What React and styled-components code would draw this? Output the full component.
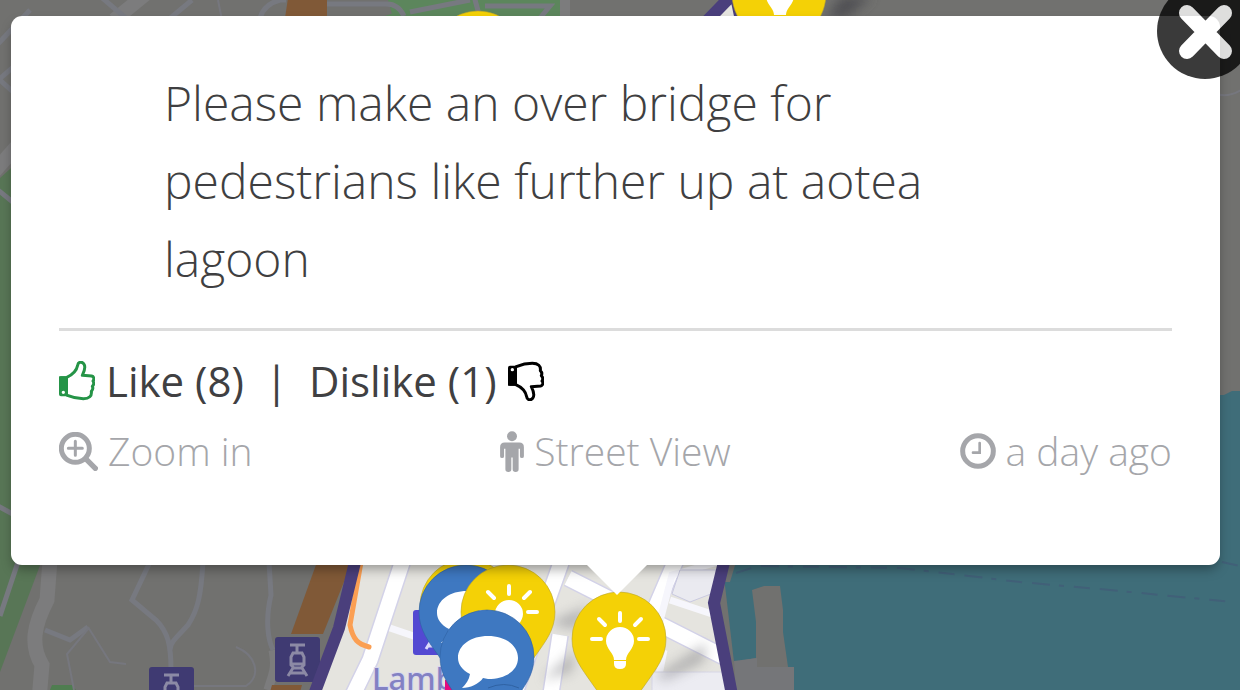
import React from 'react';
import styled, { createGlobalStyle } from 'styled-components';

const GlobalStyle = createGlobalStyle`
  *, *::before, *::after {
    box-sizing: border-box;
  }

  body {
    margin: 0;
    overflow: hidden;
    font-family: 'Open Sans', 'Noto Sans', sans-serif;
  }
`;

const Page = styled.main`
  position: relative;
  min-height: 100vh;
  padding: 16px 20px 0 11px;
  overflow: hidden;
  background: #71716f;
`;

const MapCanvas = styled.svg`
  position: absolute;
  inset: 0;
  width: 100%;
  height: 100%;
`;

const Popup = styled.article`
  position: relative;
  padding: 48px 48px 79px;
  border-radius: 11px;
  background: #fff;
  box-shadow: 0 6px 12px -2px rgba(0, 0, 0, 0.35);

  &::after {
    content: '';
    position: absolute;
    top: 100%;
    left: 50%;
    margin-left: -29px;
    border: 30px solid transparent;
    border-top-color: #fff;
    border-bottom: 0;
  }
`;

const CloseButton = styled.button`
  position: absolute;
  top: -33px;
  right: -33px;
  width: 96px;
  height: 96px;
  padding: 0;
  border: 0;
  border-radius: 50%;
  background: none;
  cursor: pointer;

  svg {
    display: block;
    opacity: 0.77;
  }
`;

const Message = styled.blockquote`
  margin: 0 105px;
  padding-bottom: 30px;
  font-size: 48px;
  font-weight: 300;
  line-height: 78px;
  color: #3f3f41;
`;

const Divider = styled.hr`
  height: 3px;
  margin: 0 0 15px;
  border: 0;
  background: #dcdcdc;
`;

const Votes = styled.div`
  display: flex;
  align-items: center;
  font-size: 42px;
  line-height: 70px;
  color: #404042;
`;

const VoteButton = styled.button`
  display: flex;
  align-items: center;
  gap: 11px;
  padding: 0;
  border: 0;
  background: none;
  font: inherit;
  color: inherit;
  cursor: pointer;
`;

const Separator = styled.span`
  margin: 0 21px;
`;

const Actions = styled.div`
  display: grid;
  grid-template-columns: 1fr auto 1fr;
  font-size: 39px;
  font-weight: 300;
  line-height: 70px;
  color: #a5a6aa;
`;

const Action = styled.a`
  display: flex;
  align-items: center;
  justify-self: ${({ $align }) => $align || 'start'};
  gap: 10px;
  color: inherit;
  text-decoration: none;
`;

function ThumbIcon({ color, down }) {
  return (
    <svg width='36' height='40' viewBox='0 0 108 120' aria-hidden='true'>
      <g transform={down ? 'translate(0 120) scale(1 -1)' : undefined}>
        <path
          d='M3 50H22C38 43 53 29 56 13C57 2 68 1 74 8C82 18 75 33 70 43L98 45C106 47 106 56 102 60C106 66 104 72 100 76C103 82 101 87 97 91C99 105 91 113 73 113C55 113 42 110 25 103'
          fill='none'
          stroke={color}
          strokeWidth='9'
          strokeLinecap='round'
          strokeLinejoin='round'
        />
        <path
          fillRule='evenodd'
          fill={color}
          d='M6 46H27V106H6Q0 106 0 100V52Q0 46 6 46ZM13 89a5 5 0 1 0 0 10a5 5 0 1 0 0-10Z'
        />
      </g>
    </svg>
  );
}

function ZoomIcon() {
  return (
    <svg width='39' height='39' viewBox='0 0 117 117' aria-hidden='true'>
      <g fill='none' stroke='currentColor'>
        <circle cx='49' cy='49' r='42' strokeWidth='15' />
        <path d='M49 28V70M28 49H70' strokeWidth='9' strokeLinecap='round' />
        <path d='M82 82L109 109' strokeWidth='16' strokeLinecap='round' />
      </g>
    </svg>
  );
}

function PersonIcon() {
  return (
    <svg width='24' height='41' viewBox='0 0 72 124' aria-hidden='true'>
      <circle cx='36' cy='16' r='15' fill='currentColor' />
      <path
        fill='currentColor'
        d='M14 35H58Q72 35 72 49V76Q72 82 66 82T60 76V54H56V116Q56 124 47 124T38 116V80H34V116Q34 124 25 124T16 116V54H12V76Q12 82 6 82T0 76V49Q0 35 14 35Z'
      />
    </svg>
  );
}

function ClockIcon() {
  return (
    <svg width='36' height='36' viewBox='0 0 108 108' aria-hidden='true'>
      <g fill='none' stroke='currentColor'>
        <circle cx='54' cy='54' r='46' strokeWidth='15' />
        <path d='M59 30V59H39' strokeWidth='8' strokeLinecap='round' />
      </g>
    </svg>
  );
}

// Every pin is drawn round the centre of its head.
function Pin({ x, y, kind }) {
  const idea = kind === 'idea';
  return (
    <g transform={`translate(${x} ${y})`}>
      <path
        d='M0 -47A47 47 0 0 1 47 0C47 18 37 30 28 43C19 56 6 72 0 88C-6 72 -19 56 -28 43C-37 30 -47 18 -47 0A47 47 0 0 1 0 -47Z'
        fill={idea ? '#f4d106' : '#3e78c1'}
        stroke={idea ? '#b9a52c' : '#2f62a3'}
        strokeWidth='0.6'
      />
      {idea ? (
        <g transform='translate(1 0)'>
          <path
            d='M-28 0H-19M19 0H28M0 -26V-18M-21 -20L-15 -14M21 -20L15 -14'
            stroke='#fff'
            strokeWidth='4'
            strokeLinecap='round'
          />
          <path
            fill='#fff'
            d='M0 -12A14 14 0 0 1 14 2C14 10 6 14 6 21H-6C-6 14 -14 10 -14 2A14 14 0 0 1 0 -12ZM-6 22H6V25Q6 30 0 30T-6 25Z'
          />
        </g>
      ) : (
        <path
          fill='#fff'
          d='M1 -21C18 -21 31 -12 31 1S18 22 1 22L-4 21C-8 27 -17 31 -25 31C-21 27 -18 23 -17 17C-25 13 -29 7 -29 1C-29 -12 -16 -21 1 -21Z'
        />
      )}
    </g>
  );
}

function TramStop({ x, y, color, glyph }) {
  return (
    <g transform={`translate(${x} ${y})`}>
      <rect width='45' height='45' rx='3' fill={color} />
      <path
        d='M15 8H30M22 8V15M18 16H27L29 20V28L26 31H19L16 28V20ZM17 27H28M18 31L13 39M27 31L32 39M15 36H30'
        fill='none'
        stroke={glyph}
        strokeWidth='3'
      />
    </g>
  );
}

function CityMap() {
  const region =
    'M735 -8L640 90L400 400L355 562L339 628L312 700H733L714 603L724 562L800 300Z';
  return (
    <MapCanvas viewBox='0 0 1240 690' preserveAspectRatio='xMidYMid slice' aria-hidden='true'>
      <defs>
        <clipPath id='region'>
          <path d={region} />
        </clipPath>
        <filter id='soft' x='-50%' y='-50%' width='200%' height='200%'>
          <feGaussianBlur stdDeviation='6' />
        </filter>
      </defs>

      <path d='M0 178L20 160V560H42L0 672Z' fill='#587656' />
      <path d='M52 685H72L76 690H50Z' fill='#4f7d50' />
      <path d='M430 0H560V16H385ZM388 0H430L392 14Z' fill='#5c865c' />

      <g fill='none' stroke='#7c7c7d'>
        <path d='M-6 172L24 138' strokeWidth='14' />
        <path d='M50 560L47 600C34 625 30 645 42 665L39 700' strokeWidth='15' />
        <path d='M114 20L146 -6' strokeWidth='14' />
        <path d='M565 -5V20' strokeWidth='10' />
        <path d='M268 690C272 675 277 670 273 650' strokeWidth='9' />
      </g>
      <g fill='none' stroke='#777980' strokeWidth='5'>
        <path d='M-4 46L30 10M-4 82L26 56M0 80L22 100M-2 190L20 208M-2 506L20 518M18 562L0 616' />
        <path d='M150 562L132 600L156 620C168 632 171 645 171 670M203 562C201 595 198 610 188 625C178 636 170 642 170 650M269 562L271 595C265 620 268 640 273 650' />
        <path d='M45 630L70 640L88 627' />
        <path d='M100 -4L128 20M192 0L168 20M260 18Q264 4 280 0H286M320 4H385Q398 3 404 16M410 12L470 0M474 -4L480 18M485 6H550L540 18' />
      </g>
      <g fill='none' stroke='#76777e' strokeWidth='2'>
        <path d='M88 627L110 662L126 664M88 629L67 654L74 690M236 647C256 655 262 675 246 686H190' />
        <path d='M1216 94Q1230 98 1244 88M218 0L222 20' />
      </g>

      <path d='M288 -2H327V18H285Z' fill='#805937' />
      <path d='M317 562H352L323 634H291Z' fill='#805937' />
      <path d='M272 685H302L300 692H270Z' fill='#805937' />

      <path
        d='M722 560H1216V395H1224L1232 391H1244V700H794V667H788L783 632V610L780 586H764L752 590L756 622V658L734 662Z'
        fill='#3f6d79'
      />
      <path d='M734 661L757 658V667H794V692H736Z' fill='#757679' />
      <path d='M726 562H736L730 582H722Z' fill='#6e706f' />
      <path
        d='M736 573L758 566L900 568L1020 582L1110 590L1232 602M1222 562L1240 566'
        fill='none'
        stroke='#416078'
        strokeWidth='2'
        strokeDasharray='16 10 18 9 5 10'
      />

      <g clipPath='url(#region)'>
        <rect x='300' width='520' height='700' fill='#e5e4df' />
        <g fill='none' stroke='#d3d2e8' strokeWidth='18'>
          <path d='M403 560L370 660L353 695' />
          <path d='M562 560L516 690M568 578L730 660M676 560L620 690M560 635L550 700' />
        </g>
        <g fill='none' stroke='#fff' strokeWidth='15'>
          <path d='M403 560L370 660L353 695' />
          <path d='M562 560L516 690M568 578L730 660M676 560L620 690M560 635L550 700' />
        </g>
        <g fill='none' stroke='#f6f6fc' strokeWidth='7'>
          <path d='M480 560L458 600M390 628L440 645M655 640L672 575L725 560M670 600L715 615M656 690L664 650' />
        </g>
        <path d='M680 570H716V592L690 602L672 594Z' fill='#eaeaf0' stroke='#c9c9e0' />
        <path d='M652 672H734V692H652Z' fill='#ececf2' stroke='#d6d6e6' />
        <path d='M655 676L706 643L704 662L666 680Z' fill='#85858a' filter='url(#soft)' opacity='0.5' />
        <path d='M548 623L590 605L576 630Z' fill='#85858a' filter='url(#soft)' opacity='0.5' />
        <path d='M542 680L575 650L572 672Z' fill='#85858a' filter='url(#soft)' opacity='0.5' />
        <path
          d='M361 562L350 625C353 640 358 644 369 647'
          fill='none'
          stroke='#fb9f53'
          strokeWidth='5'
          strokeLinecap='round'
        />
      </g>

      <TramStop x={275} y={637} color='#3f3a72' glyph='#8c8aa5' />
      <TramStop x={149} y={667} color='#3f3a72' glyph='#8c8aa5' />
      <path d={region} fill='none' stroke='#4a3f7c' strokeWidth='12' />
      <TramStop x={413} y={610} color='#5349d2' glyph='#dcd9fa' />
      <text
        x='372'
        y='690'
        fontFamily='Noto Sans, sans-serif'
        fontSize='31'
        fontWeight='500'
        fill='#8381c3'
        stroke='#d9d9ee'
        strokeWidth='2'
        paintOrder='stroke'
      >
        Lamb
      </text>
      <path d='M445 680H470V692H445Z' fill='#e5097f' />

      <path d='M826 18L842 -4H872L846 18Z' fill='#4f5052' filter='url(#soft)' />
      <Pin x={779} y={-6} kind='idea' />
      <Pin x={478} y={58} kind='idea' />
      <Pin x={467} y={606} kind='idea' />
      <Pin x={466} y={612} kind='comment' />
      <Pin x={508} y={612} kind='idea' />
      <Pin x={487} y={657} kind='comment' />
      <Pin x={619} y={639} kind='idea' />
      <path d='M488 688Q504 681 519 688' fill='none' stroke='#2f62a3' />
    </MapCanvas>
  );
}

export default function App() {
  return (
    <>
      <GlobalStyle />
      <Page>
        <CityMap />
        <Popup>
          <Message>
            Please make an over bridge for pedestrians like further up at aotea
            lagoon
          </Message>
          <Divider />
          <Votes>
            <VoteButton type='button'>
              <ThumbIcon color='#259447' />
              Like (8)
            </VoteButton>
            <Separator>|</Separator>
            <VoteButton type='button'>
              Dislike (1)
              <ThumbIcon color='#000' down />
            </VoteButton>
          </Votes>
          <Actions>
            <Action href='#zoom'>
              <ZoomIcon />
              Zoom in
            </Action>
            <Action href='#street-view'>
              <PersonIcon />
              Street View
            </Action>
            <Action as='time' $align='end'>
              <ClockIcon />a day ago
            </Action>
          </Actions>
          <CloseButton type='button' aria-label='Close'>
            <svg width='96' height='96' viewBox='0 0 96 96' aria-hidden='true'>
              <circle cx='48' cy='48' r='48' />
              <path
                d='M30 30L67 68M67 30L30 68'
                stroke='#fff'
                strokeWidth='16'
                strokeLinecap='round'
              />
            </svg>
          </CloseButton>
        </Popup>
      </Page>
    </>
  );
}
